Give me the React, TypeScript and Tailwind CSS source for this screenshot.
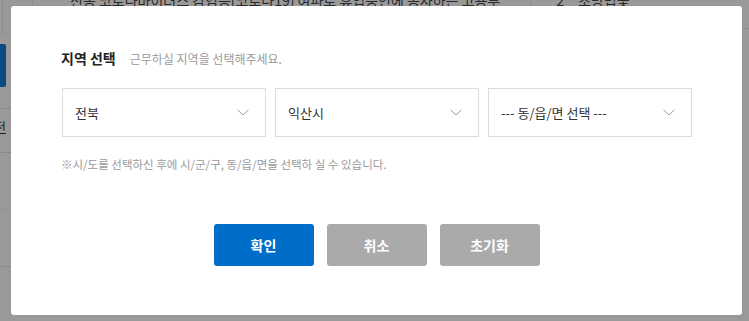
import React from "react";

const font = { fontFamily: '"Noto Sans CJK KR", "Noto Sans", sans-serif' };

function Chevron() {
  return (
    <svg width="12" height="7" viewBox="0 0 12 7" fill="none" className="shrink-0">
      <path d="M0.5 0.8 L6 6 L11.5 0.8" stroke="#9a9a9a" strokeWidth="1" />
    </svg>
  );
}

function SelectBox({ label }: { label: string }) {
  return (
    <div className="flex h-[49px] w-[204px] items-center justify-between border border-[#dcdcdc] bg-white pl-[12px] pr-[16px]">
      <span className="text-[13px] text-[#333]">{label}</span>
      <Chevron />
    </div>
  );
}

function DimmedPage() {
  return (
    <div className="flex h-full w-full flex-col">
      {/* top table row, cut by the modal */}
      <div className="flex h-[6px] items-end overflow-visible">
        <div className="h-[6px] w-px ml-[2px] bg-[#8a8a8a]" />
        <div className="h-[6px] w-px ml-[29px] bg-[#8a8a8a]" />
        <div className="ml-[37px] flex h-[6px] items-end overflow-hidden whitespace-nowrap text-[14px] leading-[12px] text-[#2a2a2a]">
          신종 코로나바이러스 감염증(코로나19) 여파로 휴업중인에 종사하는 고용부
        </div>
        <div className="h-[6px] w-px ml-[30px] bg-[#8a8a8a]" />
        <div className="ml-[25px] flex h-[6px] items-end overflow-hidden text-[14px] leading-[12px] text-[#2a2a2a]">2</div>
        <div className="ml-[14px] flex h-[6px] items-end overflow-hidden text-[14px] leading-[12px] text-[#2a2a2a]">조방법꽃</div>
      </div>
      <div className="flex flex-1">
        <div className="flex w-[11px] flex-col">
          <div className="h-[29px] w-px ml-[2px] bg-[#8a8a8a]" />
          <div className="mt-[9px] h-[43px] w-[6px] rounded-r-[2px] bg-[#0b4a80]" />
          <div className="mt-[21px] h-px w-[11px] bg-[#8a8a8a]" />
          <div className="mt-[9px] h-[18px] overflow-hidden">
            <div className="ml-[-6px] text-[13px] leading-[18px] text-[#222] underline">전</div>
          </div>
          <div className="mt-[16px] w-[11px] border-t border-dotted border-[#7a7a7a]" />
          <div className="mt-[56px] w-[11px] border-t border-dotted border-[#8a8a8a]" />
          <div className="mt-[56px] h-px w-[11px] bg-[#8a8a8a]" />
        </div>
        <div className="flex-1" />
        <div className="flex w-[7px] flex-col">
          <div className="mt-[22px] h-px w-[7px] bg-[#8a8a8a]" />
        </div>
      </div>
    </div>
  );
}

export default function App() {
  return (
    <div className="relative h-[321px] w-[749px] overflow-hidden bg-[#999999]" style={font}>
      <DimmedPage />

      {/* modal over the dimmed page */}
      <div className="absolute left-[11px] top-[6px] flex h-[309px] w-[731px] flex-col rounded-[3px] bg-white px-[50px] pt-[42px]">
        <div className="flex items-baseline gap-[14px]">
          <span className="text-[14px] font-bold text-[#222]">지역 선택</span>
          <span className="text-[12px] text-[#9a9a9a]">근무하실 지역을 선택해주세요.</span>
        </div>
        <div className="mt-[19px] flex gap-[9px] pl-px">
          <SelectBox label="전북" />
          <SelectBox label="익산시" />
          <SelectBox label="--- 동/읍/면 선택 ---" />
        </div>
        <div className="mt-[19px] text-[11.5px] text-[#9a9a9a]">
          ※시/도를 선택하신 후에 시/군/구, 동/읍/면을 선택하 실 수 있습니다.
        </div>
        <div className="mt-[51px] flex justify-center gap-[13px]">
          <button className="h-[42px] w-[100px] rounded-[3px] bg-[#006ec8] text-[14px] font-bold text-white">확인</button>
          <button className="h-[42px] w-[100px] rounded-[3px] bg-[#aaaaaa] text-[14px] font-bold text-white">취소</button>
          <button className="h-[42px] w-[100px] rounded-[3px] bg-[#aaaaaa] text-[14px] font-bold text-white">초기화</button>
        </div>
      </div>
    </div>
  );
}
